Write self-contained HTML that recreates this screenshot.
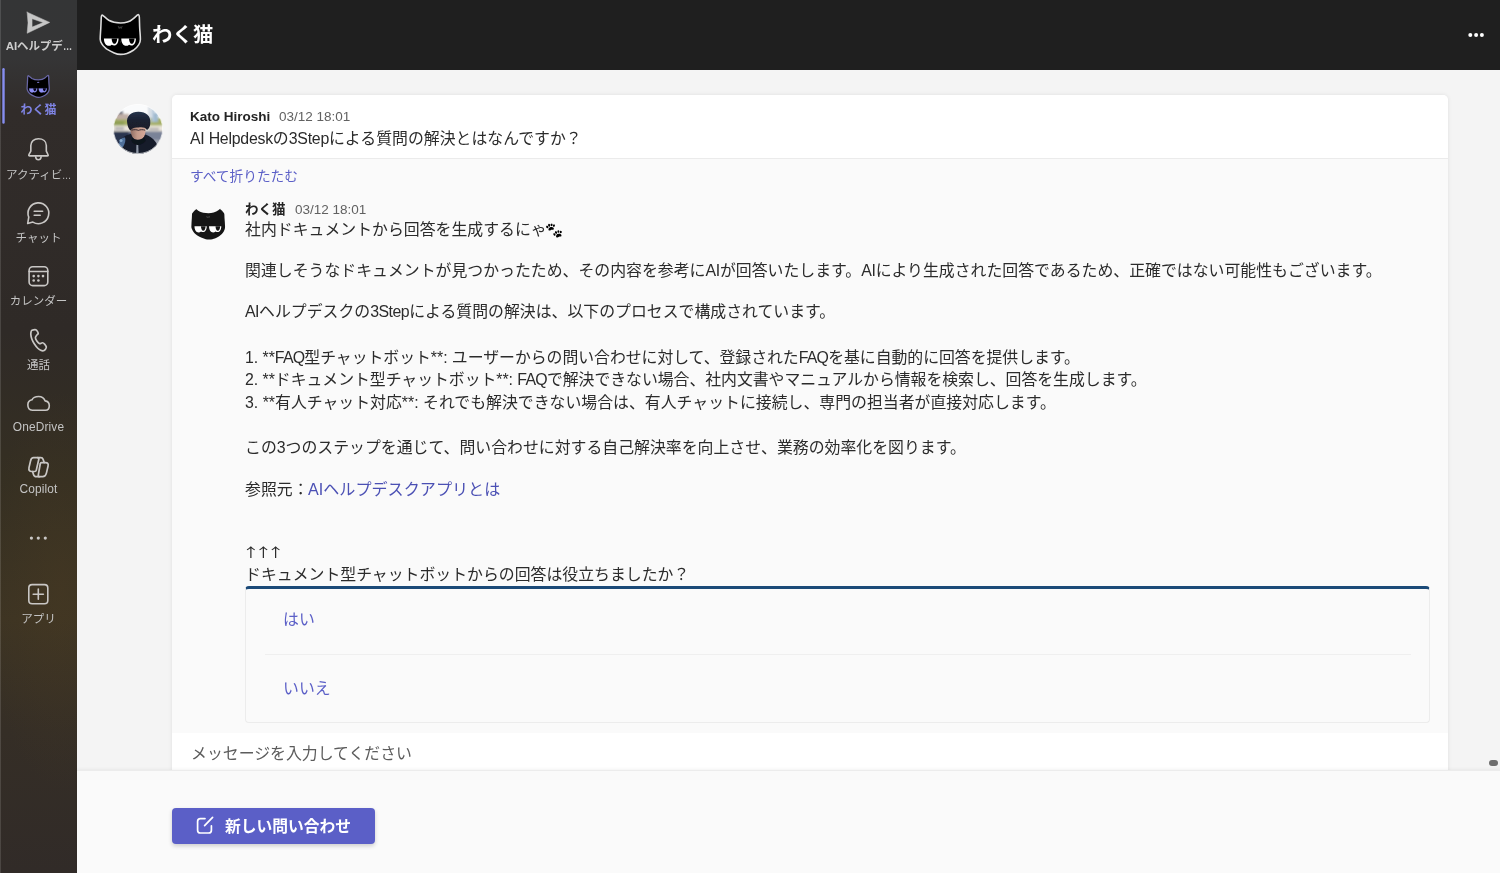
<!DOCTYPE html>
<html lang="ja">
<head>
<meta charset="utf-8">
<title>わく猫</title>
<style>
*{box-sizing:border-box;margin:0;padding:0}
html,body{width:1500px;height:873px;overflow:hidden}
body{position:relative;background:#f4f4f4;font-family:"Liberation Sans","Noto Sans CJK JP",sans-serif;color:#242424;-webkit-font-smoothing:antialiased}
.abs{position:absolute}
/* sidebar */
#side{position:absolute;left:0;top:0;width:77px;height:873px;background:
 linear-gradient(180deg,#343536 0px,#353536 58px,#312c2a 110px,#2f2a27 330px,#352f22 480px,#3d3423 620px,#352e26 730px,#312b28 873px);overflow:hidden}
#side .glow{position:absolute;left:0;top:380px;width:77px;height:420px;background:radial-gradient(ellipse 75px 200px at 62px 50%,rgba(76,60,34,.36),rgba(76,60,34,0) 100%)}
.nav{position:absolute;left:0;width:77px;text-align:center;color:#c4c4c4;font-size:11.5px;line-height:14px;white-space:nowrap}
.nav .el{display:inline-block;width:8.6px;transform:scaleX(.8);transform-origin:0 50%}
.nav.lat{font-size:11.9px;letter-spacing:.15px}
/* header */
#head{position:absolute;left:77px;top:0;width:1423px;height:70px;background:#1f1f1f}
#title{position:absolute;left:152px;top:18px;font-size:20.3px;line-height:34px;font-weight:700;color:#fff;letter-spacing:.2px}
/* card */
#card{position:absolute;left:172px;top:95px;width:1276px;height:676px;background:#fafafa;border-radius:5px 5px 0 0;box-shadow:0 0 4px rgba(0,0,0,.09)}
#cardtop{position:absolute;left:0;top:0;width:100%;height:64px;background:#fff;border-radius:5px 5px 0 0;border-bottom:1px solid #ebebeb}
.t{position:absolute;white-space:nowrap;font-size:15.88px;line-height:23px;color:#2b2b2b}
.name{position:absolute;white-space:nowrap;font-size:13.5px;line-height:18px;font-weight:700;color:#242424}
.time{position:absolute;white-space:nowrap;font-size:13.5px;line-height:18px;color:#616161}
.l{letter-spacing:-.25px}
.lf{letter-spacing:-.75px}
.l2{letter-spacing:-.5px}
.paw{filter:grayscale(1) brightness(0);font-size:14.5px;position:relative;top:0;margin-left:-2px}
.t,.name,.time,.opt,.nav,#title,#btn span{will-change:transform}
a.lnk{color:#4b50b4;text-decoration:none;font-size:16.1px;margin-left:-.5px}
#ac{position:absolute;left:244.5px;top:585.5px;width:1185.5px;height:137.5px;border:1px solid #ececec;border-top:3.4px solid #1b4a78;border-radius:4px;background:#fafafa}
#acsep{position:absolute;left:265px;top:654px;width:1146px;height:1px;background:#efefef}
.opt{position:absolute;white-space:nowrap;font-size:15.88px;line-height:23px;color:#5b5fc7}
#input{position:absolute;left:172px;top:733px;width:1276px;height:38px;background:#fff}
#bottom{position:absolute;left:77px;top:770px;width:1423px;height:103px;background:#fafafa;border-top:1px solid #ececec;box-shadow:0 -1px 3px rgba(0,0,0,.05)}
#btn{position:absolute;left:172px;top:808px;width:203px;height:36px;border-radius:4px;background:#5b5fc7;box-shadow:0 2px 4px rgba(0,0,0,.18)}
#btn span{position:absolute;left:53px;top:7px;font-size:15.78px;line-height:23px;font-weight:700;color:#fff;white-space:nowrap}
</style>
</head>
<body>
<svg width="0" height="0" style="position:absolute"><defs>
<g id="catbody"><path d="M2.8,1.2C5,3 7,5 9,6.3C12,8 17,9 21,9C25,9 30,8 33,5.4C35,4 37,2 38.3,0.8C39.2,0.2 40,1 40.1,3C40.3,7 40.3,11 40.5,14.4C40.7,18 41.2,22 41.2,25.6C41.2,28 40.6,29.5 39.6,31.2C38,34 36,35.5 34,36.9C31,38.8 29,39.6 27.5,40.1C25,40.9 23,41.1 21,41.1C19,41.1 16.5,40.5 14.5,39.6C11,38 9,37 7,35.8C5,34 3,32.5 1.9,30.3C0.8,28.5 0.2,27 0.2,25.6C0.2,22 0.6,18 0.8,14.4C1,11 1.1,7 1.3,3.2C1.4,1.5 2,0.6 2.8,1.2Z"/></g>
<g id="cateyes"><path d="M4,24.8L18.9,24.8C18.9,29.2 16.8,32 14.6,32C13.4,32 12.6,31.6 12,31.2C11,32.1 10,32.4 9,32.4C6,32.4 4,29 4,24.8Z"/><path d="M4,24.8L18.9,24.8C18.9,29.2 16.8,32 14.6,32C13.4,32 12.6,31.6 12,31.2C11,32.1 10,32.4 9,32.4C6,32.4 4,29 4,24.8Z" transform="translate(17.7,0)"/></g>
<g id="catpup"><path d="M11.9,24.8L17.5,24.8C17.5,27.8 16.2,30.3 14.7,30.3C13.2,30.3 11.9,27.8 11.9,24.8Z"/><path d="M11.9,24.8L17.5,24.8C17.5,27.8 16.2,30.3 14.7,30.3C13.2,30.3 11.9,27.8 11.9,24.8Z" transform="translate(17.7,0)"/></g>
</defs></svg>
<div id="side"><div class="glow"></div>
<svg class="abs" style="left:0;top:0" width="77" height="873" viewBox="0 0 77 873" fill="none" stroke="#c9c7c5" stroke-width="1.6" stroke-linecap="round" stroke-linejoin="round">
<path d="M27.16 12.17L49.71 22.39L27.16 33.29Q28.90 22.62 27.16 12.17ZM32.20 18.72L43.20 22.62L32.20 26.97Z" fill="#c6c6c6" fill-rule="evenodd" stroke="#c6c6c6" stroke-width=".5"/>
<rect x="2.3" y="68" width="2.4" height="55.8" rx="1.2" fill="#868df0" stroke="none"/><rect x="0" y="0" width="1" height="873" fill="#fff" fill-opacity=".13" stroke="none"/>
<path d="M38.39 138.80C34.04 138.80 30.83 141.45 30.83 145.58L30.83 151.08L28.90 154.74Q28.45 155.89 29.68 155.89L47.32 155.89Q48.61 155.89 48.06 154.74L46.32 151.08L46.32 145.58C46.32 141.45 42.97 138.80 38.39 138.80Z"/><path d="M35.64 156.80C35.87 158.64 37.01 159.69 38.39 159.69C39.76 159.69 40.91 158.64 41.14 156.80"/>
<path d="M32.88,222.06L27.7,223.5L28.75,217.14A10.4,10.4 0 1 1 32.88,222.06Z"/><path d="M34.2,211.3H42.6M34.2,215.3H40.2"/>
<rect x="29.1" y="266.8" width="18.7" height="18.8" rx="3.6"/><path d="M29.1,271.5H47.8"/>
<g fill="#c9c7c5" stroke="none"><circle cx="33.7" cy="276.1" r="1.3"/><circle cx="38.4" cy="276.1" r="1.3"/><circle cx="43" cy="276.1" r="1.3"/><circle cx="33.7" cy="280.5" r="1.3"/><circle cx="38.4" cy="280.5" r="1.3"/></g>
<path d="M32.20 410.21C29.45 410.21 27.85 407.83 27.85 404.85C27.85 402.33 29.45 400.27 31.97 399.81C32.89 397.75 35.41 396.46 38.62 396.46C41.83 396.46 44.12 398.20 45.12 400.86C47.78 401.18 49.29 403.24 49.29 405.76C49.29 408.28 47.78 410.21 45.49 410.21Z"/>
<g stroke-width="1.7"><path d="M33.58 457.63L37.70 457.63Q39.17 457.63 38.85 459.00L36.24 470.37Q35.96 471.51 34.72 471.51L31.75 471.51Q28.31 471.51 29.00 467.62L30.60 460.75Q31.29 457.63 33.58 457.63Z"/><path d="M41.46 462.58L45.49 462.58Q48.93 462.58 48.01 466.24L46.41 473.12Q45.49 476.69 42.74 476.69L39.53 476.69Q37.93 476.69 38.25 475.32L40.27 463.77Q40.45 462.58 41.46 462.58Z"/><path d="M37.70 457.63L40.91 457.63Q42.51 457.63 43.11 459.37L44.21 462.58"/><path d="M32.57 471.51L33.49 474.49Q34.13 476.69 36.33 476.69L39.53 476.69"/></g>
<g fill="#c9c7c5" stroke="none"><circle cx="31.4" cy="538.1" r="1.6"/><circle cx="38.3" cy="538.1" r="1.6"/><circle cx="45.3" cy="538.1" r="1.6"/></g>
<rect x="28.8" y="584.6" width="19" height="19.2" rx="3.3"/><path d="M38.3,589.1V599.3M33.2,594.2H43.4"/>
<path d="M31.97,330.31C32.61,329.99 34.19,329.53 34.95,329.53C35.72,329.53 36.01,329.68 36.56,330.31C37.11,330.94 38.18,332.52 38.25,333.29C38.33,334.05 37.49,334.17 37.01,334.89C36.54,335.62 35.41,336.57 35.41,337.64C35.41,338.71 36.33,340.31 37.01,341.31C37.70,342.30 38.62,343.35 39.53,343.60C40.45,343.84 41.67,342.70 42.51,342.77C43.35,342.85 43.95,343.38 44.58,344.05C45.20,344.73 46.09,345.99 46.27,346.80C46.45,347.62 46.10,348.29 45.63,348.96C45.16,349.62 44.25,350.56 43.43,350.79C42.60,351.02 41.62,350.75 40.68,350.33C39.74,349.91 38.86,349.35 37.79,348.27C36.72,347.19 35.26,345.37 34.27,343.83C33.27,342.28 32.41,340.54 31.84,339.01C31.26,337.49 30.94,335.92 30.83,334.66C30.71,333.40 30.96,332.18 31.15,331.45C31.34,330.73 31.34,330.63 31.97,330.31Z" stroke-width="1.7"/>
</svg>
<svg class="abs" style="left:27.3px;top:75.2px;overflow:visible" width="22.4" height="22.5" viewBox="0 0 41.4 41.5">
<use href="#catbody" fill="#000" stroke="#6967a6" stroke-width="2.3" stroke-linejoin="round"/>
<use href="#cateyes" fill="#8e90f4" stroke="#8e90f4" stroke-width=".5"/><use href="#catpup" fill="#06061c" transform="translate(-.3,-.2)"/>
<ellipse cx="20.7" cy="13.6" rx="2.2" ry="1.1" fill="#6d6bb4"/>
</svg>
<div class="nav" style="top:39px;color:#cdcdcd;font-weight:700;letter-spacing:-.1px">AIヘルプデ<span class="el">…</span></div>
<div class="nav" style="top:103px;color:#7e83e2;font-weight:700;font-size:12px">わく猫</div>
<div class="nav" style="top:168px;">アクティビ<span class="el">…</span></div>
<div class="nav" style="top:230.5px;">チャット</div>
<div class="nav" style="top:294px;">カレンダー</div>
<div class="nav" style="top:358px;">通話</div>
<div class="nav lat" style="top:420px;">OneDrive</div>
<div class="nav lat" style="top:482px;">Copilot</div>
<div class="nav" style="top:612px;">アプリ</div>
</div>
<div id="head"></div>
<svg class="abs" style="left:100.2px;top:14.2px;overflow:visible" width="40.6" height="40.9" viewBox="0 0 41.4 41.5">
<use href="#catbody" fill="#000" stroke="#dedede" stroke-width="1.6" stroke-linejoin="round"/>
<use href="#cateyes" fill="#fff"/><use href="#catpup" fill="#000"/>
<path d="M18.6,12.3l1,2.4l1-1.8l1,1.8l1-2.4" fill="none" stroke="#5a5a5a" stroke-width=".7"/>
<path d="M20.3,28.2l.7,.8l.7-.8z" fill="#666"/>
</svg>
<svg class="abs" style="left:1466px;top:30px" width="20" height="10" viewBox="1466 30 20 10" fill="#fff"><circle cx="1470.3" cy="34.9" r="2"/><circle cx="1476.1" cy="34.9" r="2"/><circle cx="1481.9" cy="34.9" r="2"/></svg>
<div id="title">わく猫</div>

<div id="card"><div id="cardtop"></div></div>
<svg class="abs" style="left:113px;top:104px" width="50" height="50" viewBox="0 0 50 50">
<defs><clipPath id="avc"><circle cx="25" cy="25" r="24.8"/></clipPath>
<filter id="b1" x="-30%" y="-30%" width="160%" height="160%"><feGaussianBlur stdDeviation="1.2"/></filter>
<filter id="b2" x="-30%" y="-30%" width="160%" height="160%"><feGaussianBlur stdDeviation="0.6"/></filter>
<linearGradient id="skin" x1="0" x2="1" y1="0" y2="0"><stop offset="0" stop-color="#8e6c62"/><stop offset=".45" stop-color="#c39a8a"/><stop offset="1" stop-color="#d7a99a"/></linearGradient>
<linearGradient id="hair" x1="0" x2="0" y1="0" y2="1"><stop offset="0" stop-color="#26344c"/><stop offset=".5" stop-color="#1a2030"/><stop offset="1" stop-color="#1c1f2a"/></linearGradient>
</defs>
<g clip-path="url(#avc)">
<rect width="50" height="50" fill="#fafbfc"/>
<g filter="url(#b1)">
<rect x="-3" y="14" width="56" height="8" fill="#a4ae62"/>
<rect x="-3" y="17" width="14" height="5" fill="#8f9f55"/>
<rect x="4" y="7.5" width="6" height="3" fill="#5d6475"/>
<rect x="3" y="10" width="13" height="5.5" fill="#bfaea6"/>
<rect x="35.6" y="2" width="1.8" height="17" fill="#c3ccd6"/>
<rect x="38.6" y="5" width="3" height="13" fill="#b4c7d9"/>
<rect x="41" y="9" width="4" height="9" fill="#9fb9cf"/>
<rect x="-3" y="21.5" width="56" height="6" fill="#ebe6dc"/>
<rect x="2" y="23.5" width="9" height="2" fill="#9a9aa2"/>
<rect x="36" y="24" width="10" height="2" fill="#a9a6a8"/>
<rect x="-3" y="27.5" width="56" height="25" fill="#5a647b"/>
<rect x="33" y="27.5" width="20" height="9" fill="#7a8398"/>
<rect x="35" y="36" width="18" height="10" fill="#a3a8b3"/>
<rect x="-3" y="27.5" width="19" height="25" fill="#2b3650"/>
</g>
<g filter="url(#b2)">
<path d="M4,52L7,38C9,32.5 15,30 19,30L31,30.5C36,31 41.5,35 44,40.5L48,52Z" fill="#151b2c"/>
<path d="M6,41C6,36 9,33 12,33.5C13,36 12,40 10,43C8,44 6,43 6,41Z" fill="#4f709a"/>
<circle cx="8" cy="36.5" r="1.6" fill="#86a9cc"/>
<path d="M23.4,40L25.2,40L25.6,49L23.2,49Z" fill="#8f98a6"/>
<path d="M17.4,24.5C17.2,20 32.8,20 32.6,24.5C32.8,29 31.8,32.5 29.4,35C27.2,36.9 23.2,36.9 21,35C18.6,32.5 17.4,29 17.4,24.5Z" fill="url(#skin)"/>
<path d="M19.5,33.5C22,36.5 28,36.5 31,33L33,36.5C31,40 27,41 25,41C23,41 19.5,40 18,36.5Z" fill="#11151f"/>
<path d="M14.2,19C13,12 18.5,7.6 25.6,7.8C33,7.8 38,12 37.3,19C37.2,22.5 35.8,25 34,26C32.5,23.5 29,23 25.5,23.6C22,23 19,24 17.5,26.5C16,25.5 14.6,22.5 14.2,19Z" fill="url(#hair)"/>
<path d="M18.5,26.2C21,25.4 24,25.6 25.4,26.4C27,25.6 30,25.4 32.2,26.2" stroke="#3b2f35" stroke-width="1" fill="none"/>
</g>
</g><circle cx="25" cy="25" r="24.6" fill="none" stroke="#fff" stroke-opacity=".75" stroke-width=".9"/></svg>
<svg class="abs" style="left:188px;top:204px" width="41" height="41" viewBox="188 204 41 41">
<defs><clipPath id="botclip"><circle cx="208.2" cy="224.6" r="19.6"/></clipPath></defs>
<g clip-path="url(#botclip)"><g transform="translate(191.2,205.8) scale(0.822)">
<use href="#catbody" fill="#151515"/>
<use href="#cateyes" fill="#fff"/><use href="#catpup" fill="#151515"/>
<path d="M18.6,12.3l1,2.4l1-1.8l1,1.8l1-2.4" fill="none" stroke="#4a4a4a" stroke-width=".8"/>
</g></g></svg>


<div class="name" style="left:190px;top:108px">Kato Hiroshi</div>
<div class="time" style="left:279px;top:108px">03/12 18:01</div>
<div class="t" style="left:190px;top:127.3px"><span class="l">AI Helpdesk</span>の<span class="l">3Step</span>による質問の解決とはなんですか？</div>
<div class="t" style="left:190px;top:165px;font-size:13.7px;color:#5b5fc7">すべて折りたたむ</div>

<div class="name" style="left:245px;top:201px">わく猫</div>
<div class="time" style="left:295px;top:201px">03/12 18:01</div>
<div class="t" style="left:244.5px;top:218.3px">社内ドキュメントから回答を生成するにゃ<span class="paw">🐾</span></div>
<div class="t" style="left:244.5px;top:259px">関連しそうなドキュメントが見つかったため、その内容を参考に<span class="l">AI</span>が回答いたします。<span class="l">AI</span>により生成された回答であるため、正確ではない可能性もございます。</div>
<div class="t" style="left:244.5px;top:300px"><span class="l2">AI</span>ヘルプデスクの<span class="l2">3Step</span>による質問の解決は、以下のプロセスで構成されています。</div>
<div class="t" style="left:244.5px;top:345.7px;letter-spacing:-.04px">1. **<span class="lf">FAQ</span>型チャットボット**: ユーザーからの問い合わせに対して、登録された<span class="lf">FAQ</span>を基に自動的に回答を提供します。</div>
<div class="t" style="left:244.5px;top:368px;letter-spacing:-.04px">2. **ドキュメント型チャットボット**: <span class="lf">FAQ</span>で解決できない場合、社内文書やマニュアルから情報を検索し、回答を生成します。</div>
<div class="t" style="left:244.5px;top:391px">3. **有人チャット対応**: それでも解決できない場合は、有人チャットに接続し、専門の担当者が直接対応します。</div>
<div class="t" style="left:244.5px;top:436px">この3つのステップを通じて、問い合わせに対する自己解決率を向上させ、業務の効率化を図ります。</div>
<div class="t" style="left:244.5px;top:477.5px">参照元：<a class="lnk">AIヘルプデスクアプリとは</a></div>
<div class="t" style="left:241.5px;top:539.6px;font-family:'Noto Sans CJK JP',sans-serif;font-size:12.6px;letter-spacing:-3.8px;transform:scaleX(1.41);transform-origin:0 0">↑↑↑</div>
<div class="t" style="left:244.5px;top:562.5px">ドキュメント型チャットボットからの回答は役立ちましたか？</div>

<div id="ac"></div>
<div id="acsep"></div>
<div class="opt" style="left:283px;top:608px">はい</div>
<div class="opt" style="left:283px;top:677px">いいえ</div>

<div id="input"></div>
<div class="t" style="left:191px;top:742px;color:#5c5c5c">メッセージを入力してください</div>
<div id="bottom"></div>
<div class="abs" style="left:1489px;top:760px;width:9px;height:6px;border-radius:3px;background:#6f6f6f"></div>
<div id="btn"><svg class="abs" style="left:24px;top:8px" width="18" height="19" viewBox="0 0 18 19" fill="none" stroke="#fff" stroke-width="1.7" stroke-linecap="round" stroke-linejoin="round"><path d="M9,2.6H4.4C2.9,2.6 1.6,3.8 1.6,5.4V14.2C1.6,15.7 2.9,17 4.4,17H12.6C14.1,17 15.4,15.7 15.4,14.2V9.8"/><path d="M16.6,1.4L8.6,9.6"/></svg><span>新しい問い合わせ</span></div>
</body>
</html>
